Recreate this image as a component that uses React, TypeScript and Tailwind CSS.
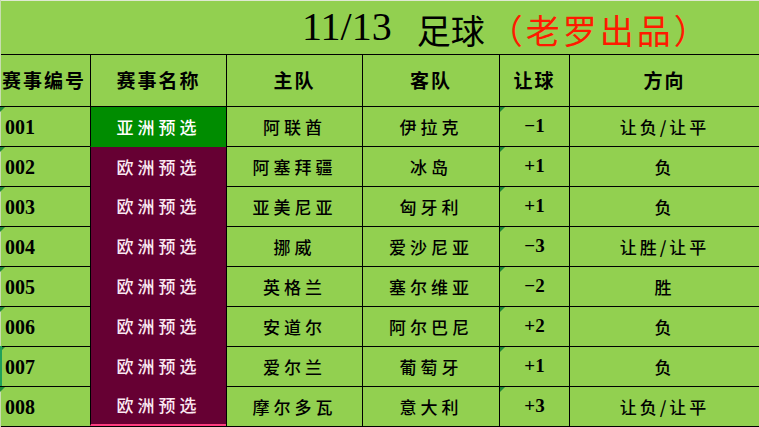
import React from "react"

type Row = {
  id: string
  league: string
  home: string
  away: string
  handicap: string
  pick: string
}

const rows: Row[] = [
  { id: "001", league: "亚洲预选", home: "阿联酋", away: "伊拉克", handicap: "−1", pick: "让负/让平" },
  { id: "002", league: "欧洲预选", home: "阿塞拜疆", away: "冰岛", handicap: "+1", pick: "负" },
  { id: "003", league: "欧洲预选", home: "亚美尼亚", away: "匈牙利", handicap: "+1", pick: "负" },
  { id: "004", league: "欧洲预选", home: "挪威", away: "爱沙尼亚", handicap: "−3", pick: "让胜/让平" },
  { id: "005", league: "欧洲预选", home: "英格兰", away: "塞尔维亚", handicap: "−2", pick: "胜" },
  { id: "006", league: "欧洲预选", home: "安道尔", away: "阿尔巴尼", handicap: "+2", pick: "负" },
  { id: "007", league: "欧洲预选", home: "爱尔兰", away: "葡萄牙", handicap: "+1", pick: "负" },
  { id: "008", league: "欧洲预选", home: "摩尔多瓦", away: "意大利", handicap: "+3", pick: "让负/让平" },
]

const cjk = "font-['SimSun','Noto_Sans_CJK_SC',serif]"
const num = "font-['Liberation_Serif','Noto_Sans_CJK_SC',serif]"

// little excel "number stored as text" marker
const Flag = () => (
  <span className="absolute left-0 top-0 h-0 w-0 border-l-[5px] border-b-[5px] border-l-[#1f8a3a] border-b-transparent" />
)

export default function App() {
  return (
    <div className="relative h-[427px] w-[759px] overflow-hidden bg-[#92d050] text-black">
      <div className="absolute left-0 top-0 h-px w-full bg-[#dfe9d3]" />
      <div className="absolute left-0 top-0 h-full w-px bg-[#c8ddb0]" />

      {/* title */}
      <div className="flex h-[54px] items-end pb-[7px] pl-[302px]">
        <span className={`${num} text-[40px] leading-none`}>11/13</span>
        <span className={`${cjk} ml-[25px] text-[34px] leading-none tracking-[0px]`}>足球</span>
        <span className={`${cjk} ml-[4px] text-[34px] leading-none tracking-[3px] text-[#ff1a00]`}>（老罗出品）</span>
      </div>

      <div className="grid grid-cols-[90px_136px_136px_137px_70px_190px] border-b border-black">
        {["赛事编号", "赛事名称", "主队", "客队", "让球", "方向"].map((h, i) => (
          <div
            key={h}
            className={`flex h-[52px] items-center border-t border-black ${i > 0 ? "justify-center border-l" : "pl-[2px]"} ${cjk} text-[19px] font-semibold tracking-[2px]`}
          >
            {h}
          </div>
        ))}

        {rows.map((r, idx) => {
          const asia = r.league === "亚洲预选"
          return (
            <React.Fragment key={r.id}>
              <div className={`relative flex h-[40px] items-center border-t border-black pl-[5px] ${num} text-[20px] font-bold`}>
                <Flag />
                {r.id}
              </div>
              <div
                className={`flex h-[40px] items-center justify-center border-l border-black ${cjk} text-[17px] font-medium tracking-[4px] ${
                  asia ? "border-t bg-[#008c00] text-white" : "bg-[#660033] text-[#fbe9f2]"
                } ${idx === 1 ? "border-t border-t-[#008c00]" : ""} ${idx === rows.length - 1 ? "border-b-2 border-b-[#ff3d7f]" : ""}`}
              >
                {r.league}
              </div>
              <div className={`flex h-[40px] items-center justify-center border-l border-t border-black ${cjk} text-[17px] font-medium tracking-[4px]`}>
                {r.home}
              </div>
              <div className={`flex h-[40px] items-center justify-center border-l border-t border-black ${cjk} text-[17px] font-medium tracking-[4px]`}>
                {r.away}
              </div>
              <div className={`relative flex h-[40px] items-center justify-center border-l border-t border-black ${num} text-[19px] font-bold`}>
                <Flag />
                {r.handicap}
              </div>
              <div className={`flex h-[40px] items-center justify-center border-l border-t border-black ${cjk} text-[17px] font-medium tracking-[3px]`}>
                {r.pick}
              </div>
            </React.Fragment>
          )
        })}
      </div>
      <div className="absolute left-0 top-[346px] h-[40px] w-[2px] bg-[#1fa05a]" />
    </div>
  )
}
